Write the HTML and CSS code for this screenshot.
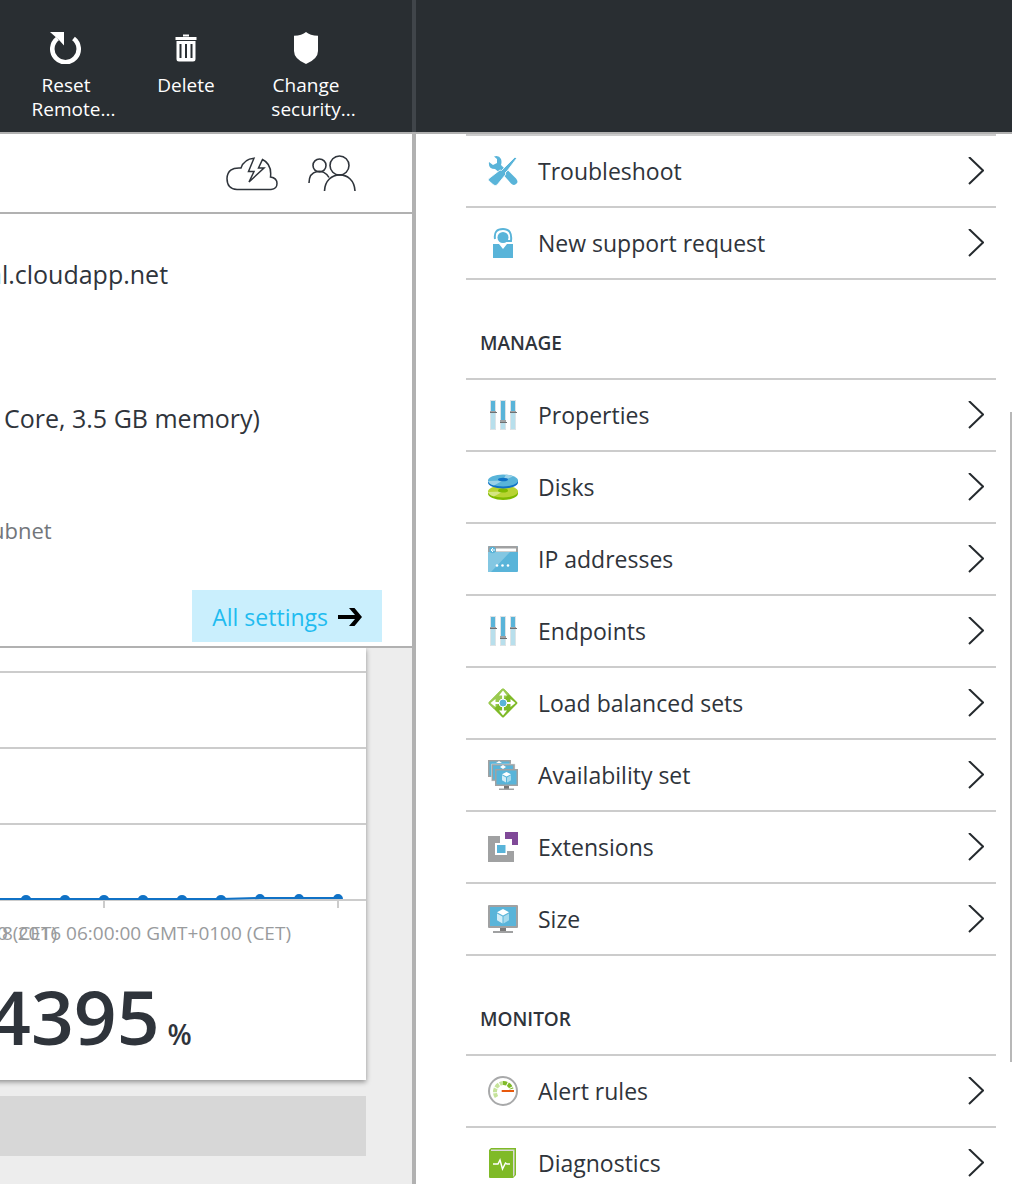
FILE: index.html
```html
<!DOCTYPE html>
<html lang="en">
<head>
<meta charset="utf-8">
<meta name="viewport" content="width=device-width, initial-scale=1">
<title>Virtual machine settings</title>
<link rel="stylesheet" href="styles.css">
</head>
<body>
<svg class="defs" aria-hidden="true">
  <symbol id="chevron" viewBox="0 0 16 28"><path d="M1 0l14 13.500L1 27" fill="none" stroke="#252a2e" stroke-width="2"/></symbol>
  <symbol id="sliders" viewBox="0 0 30 30">
    <path fill="#dce3e6" d="M2 0h6v30H2zM12 0h6v30h-6zM22 0h6v30h-6z"/>
    <path fill="#b8dfec" d="M3 1h4v28H3zM13 1h4v28h-4zM23 1h4v28h-4z"/>
    <path fill="#59b4d9" d="M3 1h4v10H3zM13 1h4v20h-4zM23 1h4v10h-4z"/>
    <path fill="#a0a1a2" d="M2 11h6v2H2zM12 20h6v3h-6zM22 11h6v2h-6z"/>
    <path fill="#6e7072" d="M2 12h7v1H2zM12 22h7v1h-7zM22 12h7v1h-7z"/>
  </symbol>
  <symbol id="monitor" viewBox="0 0 30 30">
    <path fill="#7a7a7a" d="M12 23h6v4h-6z"/><path fill="#a0a1a2" d="M5 27h20v2H5z"/>
    <rect y="1" width="30" height="23" rx="1" fill="#a0a1a2"/><path fill="#59b4d9" d="M2 3h26v19H2z"/>
    <path fill="#fff" d="M15 5l6 3.300-6 3.300-6-3.300z"/><path fill="#d2edf7" d="M9 9.500l5.500 3v7L9 16.200z"/><path fill="#a5d9ec" d="M21 9.500l-5.500 3v7l5.500-3.300z"/>
  </symbol>
</svg>
<main class="portal">
  <section class="blade blade-vm">
    <header class="blade-head">
      <button type="button" class="command">
        <svg class="command-icon" viewBox="0 0 32 32"><path d="M7.500 6.500A13.200 13.200 0 1 0 23.500 6.500" fill="none" stroke="#fff" stroke-width="4.600"/><path d="M0 0h14v13.500L9 8z" fill="#fff"/></svg>
        <span>Reset<br>Remote<span class="hang">...</span></span>
      </button>
      <button type="button" class="command">
        <svg class="command-icon" viewBox="0 0 32 32"><path fill="#fff" d="M13 2.500h6v2h-6zM5.500 5h21v3h-21zM6.500 9h19v18q0 2.500-2.500 2.500H9Q6.500 29.500 6.500 27z"/><path fill="#292e32" d="M9.500 12h2v14h-2zM15 12h2v14h-2zM20.500 12h2v14h-2z"/></svg>
        <span>Delete</span>
      </button>
      <button type="button" class="command">
        <svg class="command-icon" viewBox="0 0 32 32"><path fill="#fff" d="M16 0q4 3.500 12 3.700V19q0 8-12 13Q4 27 4 19V3.700Q12 3.500 16 0z"/></svg>
        <span>Change<br>security<span class="hang">...</span></span>
      </button>
    </header>
    <nav class="shortcuts" aria-label="Shortcuts">
      <button type="button" class="shortcut" aria-label="Quick start">
        <svg width="52" height="36" viewBox="0 0 52 36" fill="none" stroke="#2f343b" stroke-width="1.500"><path d="M28 3.200Q18 4 15 13Q1.500 12 1 23.500Q1 34 11 34.500h34q6-.5 6-6T44.500 22Q46 9 36.500 4.500l-4 8.500h5.500L23 27l5-10.500h-5.500z"/></svg>
      </button>
      <button type="button" class="shortcut" aria-label="Users">
        <svg width="48" height="36" viewBox="0 0 48 36" fill="none" stroke="#2f343b" stroke-width="1.600"><circle cx="11.500" cy="10.500" r="6.500"/><circle cx="31.500" cy="10.500" r="9.500"/><path d="M1 28C1 14 16 13 21 22.500M16.500 36C17 15 46 14 47 36"/></svg>
      </button>
    </nav>
    <div class="details">
      <p class="detail detail-host">al.cloudapp.net</p>
      <p class="detail detail-size">Core, 3.5 GB memory)</p>
      <p class="detail detail-net">ubnet</p>
      <a class="all-settings" href="#settings">All settings
        <svg width="24" height="18" viewBox="0 0 24 18"><path fill="#000" d="M0 7h17l-6-7h5.500L24 9l-7.500 9H11l6-7H0z"/></svg>
      </a>
    </div>
    <div class="lens">
      <article class="tile">
        <div class="plot">
          <svg class="series" width="366" height="20" viewBox="0 0 366 20"><path d="M-13 10H221L260 9H342" fill="none" stroke="#1072c6" stroke-width="2"/><g fill="#1072c6"><path d="M21 10a5 4 0 0 1 10 0zM60 10a5 4 0 0 1 10 0zM99 10a5 4 0 0 1 10 0zM138 10a5 4 0 0 1 10 0zM177 10a5 4 0 0 1 10 0zM216 10a5 4 0 0 1 10 0zM255 10a5 5 0 0 1 10 0zM294 10a5 5 0 0 1 10 0zM333 10a5 5 0 0 1 10 0z"/></g><path fill="#ccc" d="M103 12h2v7h-2zM337 12h2v7h-2z"/></svg>
        </div>
        <div class="axis"><span class="tick tick-prev">0 (CET)</span><span class="tick">8 2016 06:00:00 GMT+0100 (CET)</span></div>
        <p class="metric">4395<span class="unit">%</span></p>
      </article>
      <div class="placeholder"></div>
    </div>
  </section>
  <section class="blade blade-settings" id="settings">
    <header class="blade-head"></header>
    <div class="menu">
      <ul class="list">
        <li><a href="#troubleshoot"><svg class="icon" viewBox="0 0 30 30" fill="#59b4d9"><path d="M1 6l4 3 4-2V3L6 .5Q11-1 13 3q1 3 0 6l4 4-5 4-5-4Q0 13 1 6z"/><path d="M15.500 19l4.500-4.500 8 8q3 3.500 0 5.500-2.500 2-5-.5z"/><path d="M27 1l1.500 1.500-9 12L17 17l1 1-9 11q-2 1.500-4-.5l-4-3.500Q-.5 24 1 22.500L12 14l1.500.5L16 12z" stroke="#fff" stroke-width=".8"/></svg><span>Troubleshoot</span><svg class="chevron"><use href="#chevron"/></svg></a></li>
        <li><a href="#support"><svg class="icon" viewBox="0 0 30 30"><path d="M7 11Q5.500 1 15 1t8 12h-5" fill="none" stroke="#59b4d9" stroke-width="2"/><circle cx="15" cy="9.500" r="5.500" fill="#59b4d9"/><path fill="#59b4d9" d="M5 16h6l4 5 4-5h6v14H5z"/></svg><span>New support request</span><svg class="chevron"><use href="#chevron"/></svg></a></li>
      </ul>
      <h2>MANAGE</h2>
      <ul class="list">
        <li><a href="#properties"><svg class="icon"><use href="#sliders"/></svg><span>Properties</span><svg class="chevron"><use href="#chevron"/></svg></a></li>
        <li><a href="#disks"><svg class="icon" viewBox="0 0 30 30"><path fill="#7fba00" d="M0 19.500v2a15 6.500 0 0 0 30 0v-2z"/><ellipse cx="15" cy="19.500" rx="15" ry="6" fill="#b8d432"/><path fill="#d5e584" d="M15 19.500L0 20q1 3 6 4.500z"/><ellipse cx="15" cy="18.500" rx="5" ry="2" fill="#7fba00"/><path fill="#1072c6" d="M0 8v2.500a15 6 0 0 0 30 0V8z"/><ellipse cx="15" cy="8.500" rx="15" ry="6" fill="#59b4d9"/><path fill="#9bd2e8" d="M15 8.500L0 9q1 3 6 4.500zM15 8.500l3-6q5 .5 7 2z"/><ellipse cx="15" cy="7.500" rx="5" ry="1.800" fill="#1072c6"/></svg><span>Disks</span><svg class="chevron"><use href="#chevron"/></svg></a></li>
        <li><a href="#ip"><svg class="icon" viewBox="0 0 30 30"><rect y="2" width="30" height="26" rx="1" fill="#59b4d9"/><path fill="#83c7e2" d="M0 8h22L3 28H0z"/><path fill="#a0a1a2" d="M1 2h28l1 1v5H0V3z"/><path fill="#fff" d="M8 4.500h20v3H8z"/><circle cx="4.500" cy="6" r="3.200" fill="#59b4d9"/><path d="M7 6H3m2-2L3 6l2 2" stroke="#fff" fill="none"/><circle cx="9" cy="21.500" r="1.300" fill="#fff"/><circle cx="14.500" cy="21.500" r="1.300" fill="#fff"/><circle cx="20" cy="21.500" r="1.300" fill="#fff"/></svg><span>IP addresses</span><svg class="chevron"><use href="#chevron"/></svg></a></li>
        <li><a href="#endpoints"><svg class="icon"><use href="#sliders"/></svg><span>Endpoints</span><svg class="chevron"><use href="#chevron"/></svg></a></li>
        <li><a href="#load"><svg class="icon" viewBox="0 0 30 30"><rect x="4.400" y="4.400" width="21.200" height="21.200" rx="1.500" transform="rotate(45 15 15)" fill="#7fba27"/><path fill="#9aca50" d="M1 14L14 1q1-1 2 0l5 5L6 21l-5-5q-1-1 0-2z"/><path d="M15 4v22M4 15h22" fill="none" stroke="#fff" stroke-width="1.800"/><path fill="#fff" d="M15 2.500l4 5h-8zM15 27.500l4-5h-8zM2.500 15l5-4v8zM27.500 15l-5-4v8z"/><circle cx="15" cy="15" r="4" fill="#59b4d9" stroke="#fff"/></svg><span>Load balanced sets</span><svg class="chevron"><use href="#chevron"/></svg></a></li>
        <li><a href="#availability"><svg class="icon" viewBox="0 0 30 30"><path fill="#a0a1a2" d="M0 0h23v17H0z"/><path fill="#59b4d9" d="M1.500 1.500h20v14h-20z"/><path fill="#fff" d="M11 1l3 2H8z"/><path fill="#a0a1a2" stroke="#d8e5ea" stroke-width=".5" d="M3.500 4H27v17H3.500z"/><path fill="#59b4d9" d="M5 5.500h20v14H5z"/><path fill="#fff" d="M15 5l3 2-3 2-3-2z"/><path fill="#777" d="M16 25h5v4h-5z"/><path fill="#a0a1a2" d="M11 28.500h15V30H11zM7 9h23v17H7z"/><path fill="#59b4d9" d="M8.500 10.500h20v14h-20z"/><path fill="#fff" d="M18.500 12l4.500 2.300-4.500 2.300-4.500-2.300z"/><path fill="#d2edf7" d="M14 15.200l4 2.200v5.200l-4-2.300z"/><path fill="#a5d9ec" d="M23 15.200l-4 2.200v5.200l4-2.300z"/></svg><span>Availability set</span><svg class="chevron"><use href="#chevron"/></svg></a></li>
        <li><a href="#extensions"><svg class="icon" viewBox="0 0 30 30"><path fill="#a0a1a2" d="M0 4h12v7H7v12h12v-4h7v11H0z"/><path fill="#804998" d="M17 0h13v13h-6V7h-7z"/><path fill="#59b4d9" d="M9 13h8.500v8H9z"/></svg><span>Extensions</span><svg class="chevron"><use href="#chevron"/></svg></a></li>
        <li><a href="#size"><svg class="icon"><use href="#monitor"/></svg><span>Size</span><svg class="chevron"><use href="#chevron"/></svg></a></li>
      </ul>
      <h2>MONITOR</h2>
      <ul class="list">
        <li><a href="#alerts"><svg class="icon" viewBox="0 0 30 30"><circle cx="15" cy="15" r="14" fill="#fff" stroke="#a8a9aa" stroke-width="2"/><path d="M8.500 21A9 9 0 0 1 15 7" fill="none" stroke="#c5e39a" stroke-width="4" stroke-dasharray="4 1"/><path d="M15 7a8.500 8.500 0 0 1 8.500 6" fill="none" stroke="#7fba27" stroke-width="4" stroke-dasharray="4 1"/><path fill="#e8590c" d="M14 14h12v2H14q-1-1 0-2z"/></svg><span>Alert rules</span><svg class="chevron"><use href="#chevron"/></svg></a></li>
        <li><a href="#diagnostics"><svg class="icon" viewBox="0 0 30 30"><path fill="#7fba27" d="M3 0h25v27l-3 3V3H1V2z"/><path fill="#d9d9d9" d="M3 1.500h23.500V27L25 29V3H3z"/><path fill="#7fba27" d="M1 3h24v27H2q-1 0-1-1z"/><path d="M5 16h5l2-4 2.500 9 3-6 1.500 1h3" stroke="#fff" fill="none" stroke-width="1.500"/></svg><span>Diagnostics</span><svg class="chevron"><use href="#chevron"/></svg></a></li>
      </ul>
    </div>
    <div class="scrollbar"></div>
  </section>
</main>
</body>
</html>
```
FILE: styles.css
```css
* { box-sizing: border-box; }
body {
  margin: 0;
  color: #2f343b;
  background: #fff;
  font-family: "Open Sans", "Noto Sans", sans-serif;
  font-size: 23px;
}
p, h2, ul { margin: 0; padding: 0; font-weight: 400; }
button { border: 0; padding: 0; background: none; font: inherit; color: inherit; }
a { color: inherit; text-decoration: none; }
svg { display: block; flex: none; }
.defs { display: none; }

.portal {
  display: grid;
  grid-template-columns: 104fr 149fr;
  height: 100vh;
  overflow: hidden;
}
.blade { position: relative; min-width: 0; overflow: hidden; display: flex; flex-direction: column; }
.blade-head {
  flex: none;
  display: flex;
  height: 134px;
  padding: 32px 6px 0;
  background: #292e32;
  border-bottom: 2px solid #b1b1b1;
}
.blade-vm { border-right: 4px solid #b1b1b1; overflow: visible; clip-path: inset(0 -4px 0 0); }
.blade-vm .blade-head { margin-right: -4px; box-shadow: inset -4px 0 #40454a; }

.command {
  width: 120px;
  display: flex;
  flex-direction: column;
  align-items: center;
  gap: 9px;
  color: #fff;
  font-size: 19px;
  line-height: 24px;
}
.command-icon { width: 32px; height: 32px; }
.hang { display: inline-block; width: 0; }

.shortcuts {
  flex: none;
  display: flex;
  justify-content: flex-end;
  align-items: center;
  gap: 30px;
  height: 80px;
  padding-right: 56px;
  border-bottom: 2px solid #b1b1b1;
}

.details {
  flex: none;
  display: flex;
  flex-direction: column;
  height: 434px;
  padding: 42px 30px 4px 0;
  border-bottom: 2px solid #b1b1b1;
}
.detail { white-space: nowrap; font-size: 25px; line-height: 36px; }
.detail-host { margin-left: -12px; }
.detail-size { margin-top: 108px; padding-left: 4px; }
.detail-net { margin: 76px 0 0 -9px; font-size: 22px; color: #72767b; }
.all-settings {
  display: flex;
  align-items: center;
  gap: 10px;
  align-self: flex-end;
  margin-top: auto;
  height: 52px;
  padding: 2px 20px 0;
  background: #caeffd;
  color: #1fbcf0;
}

.lens { flex: 1; background: #ededed; padding-right: 46px; overflow: hidden; }
.tile { height: 432px; margin-left: -12px; background: #fff; box-shadow: 0 2px 5px rgba(0, 0, 0, .4); overflow: hidden; }
.plot {
  display: flex;
  justify-content: flex-end;
  align-items: flex-end;
  height: 261px;
  background: repeating-linear-gradient(#fff 0 23px, #ccc 23px 25px, #fff 25px 76px);
}
.axis {
  position: relative;
  display: flex;
  justify-content: flex-end;
  height: 32px;
  margin-top: 8px;
  padding-right: 75px;
  font-size: 19px;
  line-height: 32px;
  color: #999b9d;
  white-space: nowrap;
}
.tick-prev { position: absolute; right: 309px; top: 0; }
.metric {
  display: flex;
  align-items: baseline;
  gap: 8px;
  margin-top: 22px;
  font-size: 75px;
  line-height: 90px;
  font-weight: 600;
}
.unit { font-size: 28px; }
.placeholder { margin-top: 16px; height: 60px; background: #d7d7d7; }

.menu { padding: 0 16px 0 50px; }
.list { list-style: none; border-top: 2px solid #ccc; }
.list a {
  display: flex;
  align-items: center;
  height: 72px;
  padding: 0 12px 0 22px;
  border-bottom: 2px solid #ccc;
}
.list span { flex: 1; margin-left: 20px; }
.icon { width: 30px; height: 30px; }
.chevron { width: 16px; height: 28px; }
.menu h2 { padding: 45px 14px 0; height: 98px; font-size: 19px; line-height: 36px; font-weight: 600; }
.scrollbar { position: absolute; right: 0; top: 412px; width: 2px; height: 650px; background: #b8b8b8; }
```
